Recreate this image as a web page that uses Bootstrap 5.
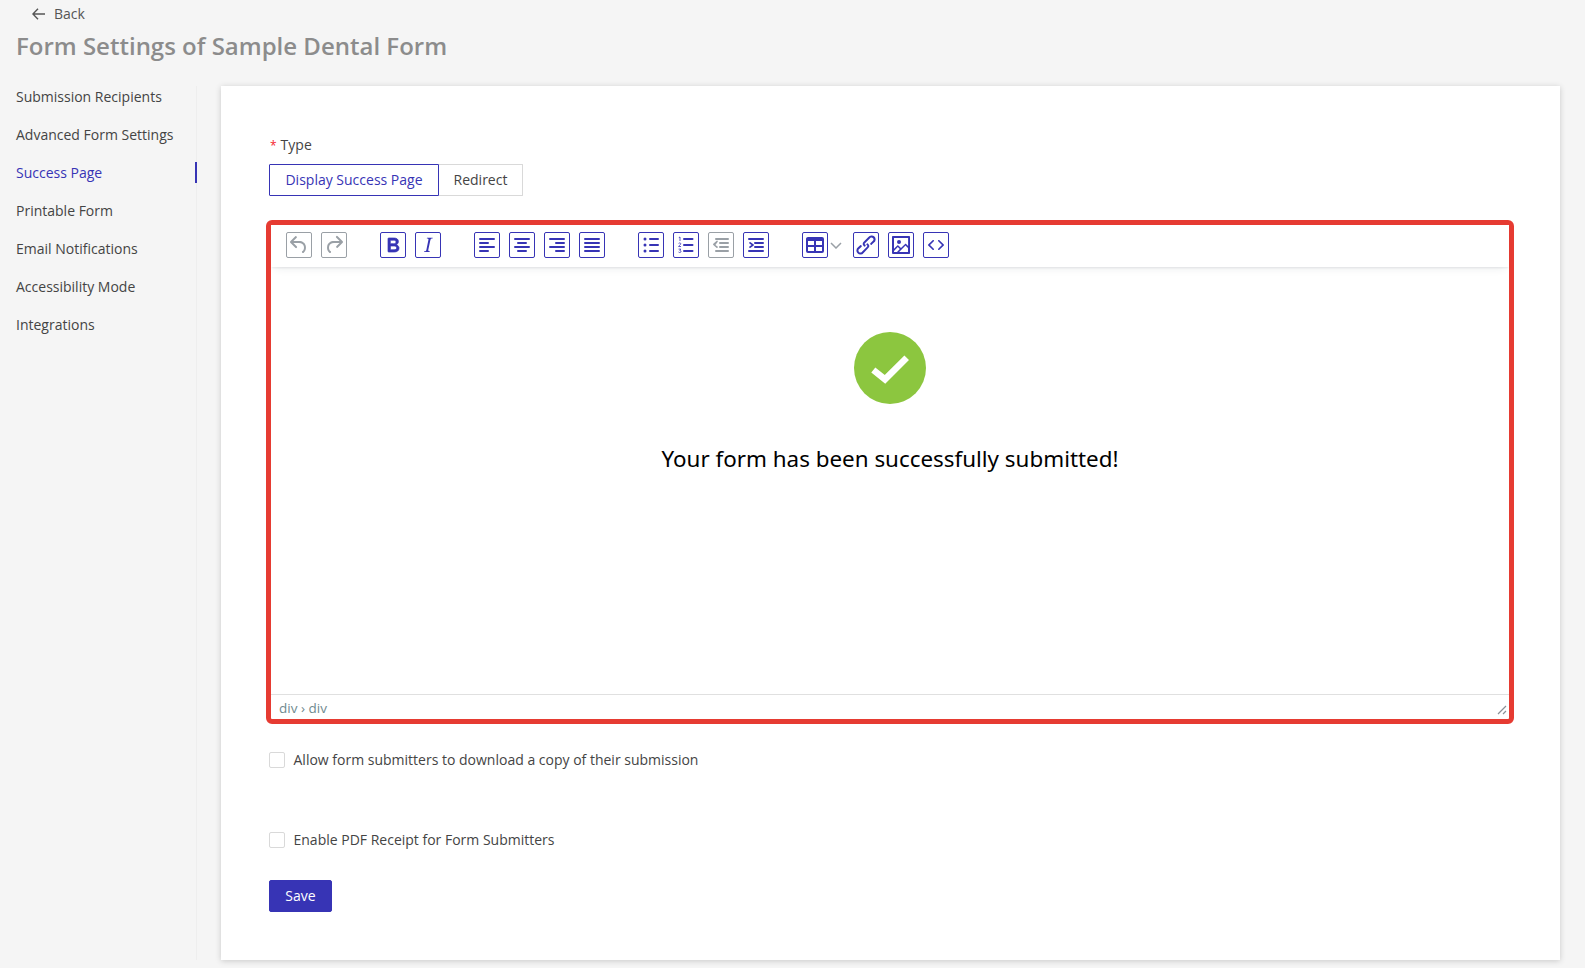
<!DOCTYPE html>
<html lang="en">
<head>
<meta charset="utf-8">
<title>Form Settings</title>
<link href="https://cdn.jsdelivr.net/npm/bootstrap@5.3.0/dist/css/bootstrap.min.css" rel="stylesheet">
<style>
html,body{height:100%}
body{background:#f5f5f5;font-family:"Open Sans","Noto Sans",sans-serif;font-size:14px;color:#444;overflow:hidden}
.back-row{height:27px;padding-left:32px;gap:9px;color:#555}
.back-row a{color:#555;text-decoration:none}
.page-title{margin:2px 0 24px 16px;font-size:24px;line-height:33px;font-weight:600;color:#8c8c8c}
.side-nav{width:197px;height:874px;border-right:1px solid #eeeeee;gap:17px}
.side-link{display:block;line-height:21px;padding-left:16px;color:#444;text-decoration:none;margin-right:-1px}
.side-link.on{color:#3734b5;border-right:2px solid #3734b5}
.sheet{width:1339px;height:874px;margin-left:24px;background:#fff;box-shadow:0 1px 6px rgba(0,0,0,.18);padding:48px 46px 0 48px}
.req-star{color:#f5222d;margin:0 4px 0 1px;font-size:12px}
.field-label{line-height:21px;margin-bottom:8px;color:#444}
.seg{width:254px}
.seg .btn{height:32px;border-radius:0;font-size:14px;line-height:30px;padding:0;background:#fff;--bs-btn-border-width:1px}
.seg .seg-on{width:170px;border:1px solid #3734b5;color:#3734b5;position:relative;z-index:1;border-radius:1px 0 0 1px}
.seg .seg-off{width:84px;border:1px solid #d9d9d9;border-left:0;color:#444;margin-left:0!important;border-radius:0 1px 1px 0}
.editor{margin:24px 0 0 -3px;height:504px;border:5px solid #e63b32;border-radius:6px;background:#fff}
.ed-bar{height:42px;padding:7px 0 0 15px;background:#fff;box-shadow:0 2px 2px -1px rgba(34,47,62,.1),0 6px 8px -4px rgba(34,47,62,.07);position:relative;z-index:1}
.ed-btn{width:26px;height:26px;flex:none;border:1px solid #3734b5;border-radius:2px;margin-right:9px;color:#3734b5;background:#fff;display:flex;align-items:center;justify-content:center}
.ed-btn.off{border-color:#9aa0a6;color:#9aa0a6}
.ed-btn svg{width:24px;height:24px;fill:currentColor;display:block}
.ed-group{margin-right:24px}
.ed-btn.tail{margin-right:0}
.ed-chev{width:16px;height:26px;margin-right:9px;color:#9aa0a6}
.ico-bold{stroke:currentColor;stroke-width:.7}
.ico-digits{fill:none;stroke:currentColor;stroke-width:.8}
.ed-body{padding-top:65px;text-align:center;color:#000}
.ed-body svg{display:block;margin:0 auto 37px}
.ed-msg{font-family:"Noto Sans","Open Sans",sans-serif;font-size:22.4px;line-height:36px;color:#000}
.ed-status{height:25px;border-top:1px solid #e0e0e0;padding:0 2px 0 8px;font-size:13.5px;line-height:26px;color:#6f8a8f}
.opt-row{height:16px;gap:8.5px;color:#444}
.opt-row .form-check-input{width:16px;height:16px;margin:0;border:1px solid #d9d9d9;border-radius:2px;flex:none}
.opt-row label{line-height:16px}
.first-opt{margin-top:28px}
.second-opt{margin-top:64px}
.save-btn{margin-top:32px;width:63px;height:32px;padding:0;border-radius:2px;background:#3734b5;border-color:#3734b5;color:#fff;font-size:14px;line-height:30px}
</style>
</head>
<body>
<div class="back-row d-flex align-items-center">
  <svg width="13" height="12" viewBox="0 0 13 12" fill="none" stroke="#555" stroke-width="1.4"><path d="M6 .7 .9 6 6 11.3M1 6h12"/></svg>
  <a href="#">Back</a>
</div>
<h1 class="page-title">Form Settings of Sample Dental Form</h1>
<div class="d-flex">
  <nav class="side-nav d-flex flex-column flex-shrink-0">
    <a class="side-link" href="#">Submission Recipients</a>
    <a class="side-link" href="#">Advanced Form Settings</a>
    <a class="side-link on" href="#">Success Page</a>
    <a class="side-link" href="#">Printable Form</a>
    <a class="side-link" href="#">Email Notifications</a>
    <a class="side-link" href="#">Accessibility Mode</a>
    <a class="side-link" href="#">Integrations</a>
  </nav>
  <main class="sheet">
    <div class="field-label"><span class="req-star">*</span>Type</div>
    <div class="btn-group seg d-flex" role="group">
      <button type="button" class="btn seg-on">Display Success Page</button>
      <button type="button" class="btn seg-off">Redirect</button>
    </div>
    <div class="editor d-flex flex-column">
      <div class="ed-bar d-flex">
        <div class="d-flex ed-group">
          <span class="ed-btn off"><svg viewBox="0 0 24 24"><path d="M6.4 8H12c3.7 0 6.2 2 6.8 5.1.6 2.7-.4 5.6-2.3 6.8a1 1 0 0 1-1-1.8c1.1-.6 1.8-2.7 1.4-4.6-.5-2.1-2.1-3.5-4.9-3.5H6.4l3.3 3.3a1 1 0 1 1-1.4 1.4l-5-5a1 1 0 0 1 0-1.4l5-5a1 1 0 0 1 1.4 1.4L6.4 8z"/></svg></span>
          <span class="ed-btn off"><svg viewBox="0 0 24 24"><path d="M17.6 10H12c-2.8 0-4.4 1.4-4.9 3.5-.4 2 .3 4 1.4 4.6a1 1 0 1 1-1 1.8c-2-1.2-2.9-4.1-2.3-6.8.6-3 3-5.1 6.8-5.1h5.6l-3.3-3.3a1 1 0 1 1 1.4-1.4l5 5a1 1 0 0 1 0 1.4l-5 5a1 1 0 0 1-1.4-1.4l3.3-3.3z"/></svg></span>
        </div>
        <div class="d-flex ed-group">
          <span class="ed-btn"><svg class="ico-bold" viewBox="0 0 24 24"><path d="M7.8 19c-.3 0-.5 0-.6-.2l-.2-.5V5.7c0-.2 0-.4.2-.5l.6-.2h5c1.5 0 2.7.3 3.5 1 .7.6 1.1 1.4 1.1 2.5a3 3 0 0 1-.6 1.9c-.4.6-1 1-1.6 1.2.4.1.9.3 1.3.6s.8.7 1 1.2c.4.4.5 1 .5 1.6 0 1.3-.4 2.3-1.3 3-.8.7-2.1 1-3.8 1H7.8zm5-8.3c.6 0 1.2-.1 1.6-.5.4-.3.6-.7.6-1.3 0-1.1-.8-1.7-2.3-1.7H9.3v3.5h3.4zm.5 6c.7 0 1.3-.1 1.7-.4.4-.4.6-.9.6-1.5s-.2-1-.7-1.4c-.4-.3-1-.4-2-.4H9.4v3.8h4z"/></svg></span>
          <span class="ed-btn"><svg viewBox="0 0 24 24"><path d="M16.7 4.7l-.1.9h-.3c-.6 0-1 0-1.4.3-.3.3-.4.6-.5 1.1l-2.1 9.8v.6c0 .5.4.8 1.4.8h.2l-.2.8H8l.2-.8h.2c1.1 0 1.8-.5 2-1.5l2-9.8.1-.5c0-.6-.4-.8-1.4-.8h-.3l.2-.9h5.8z"/></svg></span>
        </div>
        <div class="d-flex ed-group">
          <span class="ed-btn"><svg viewBox="0 0 24 24"><path d="M5 5h14a1 1 0 0 1 0 2H5a1 1 0 1 1 0-2zm0 4h8a1 1 0 0 1 0 2H5a1 1 0 1 1 0-2zm0 8h8a1 1 0 0 1 0 2H5a1 1 0 0 1 0-2zm0-4h14a1 1 0 0 1 0 2H5a1 1 0 0 1 0-2z"/></svg></span>
          <span class="ed-btn"><svg viewBox="0 0 24 24"><path d="M5 5h14a1 1 0 0 1 0 2H5a1 1 0 1 1 0-2zm3 4h8a1 1 0 0 1 0 2H8a1 1 0 1 1 0-2zm0 8h8a1 1 0 0 1 0 2H8a1 1 0 0 1 0-2zm-3-4h14a1 1 0 0 1 0 2H5a1 1 0 0 1 0-2z"/></svg></span>
          <span class="ed-btn"><svg viewBox="0 0 24 24"><path d="M5 5h14a1 1 0 0 1 0 2H5a1 1 0 1 1 0-2zm6 4h8a1 1 0 0 1 0 2h-8a1 1 0 0 1 0-2zm0 8h8a1 1 0 0 1 0 2h-8a1 1 0 0 1 0-2zm-6-4h14a1 1 0 0 1 0 2H5a1 1 0 0 1 0-2z"/></svg></span>
          <span class="ed-btn"><svg viewBox="0 0 24 24"><path d="M5 5h14a1 1 0 0 1 0 2H5a1 1 0 1 1 0-2zm0 4h14a1 1 0 0 1 0 2H5a1 1 0 1 1 0-2zm0 4h14a1 1 0 0 1 0 2H5a1 1 0 0 1 0-2zm0 4h14a1 1 0 0 1 0 2H5a1 1 0 0 1 0-2z"/></svg></span>
        </div>
        <div class="d-flex ed-group">
          <span class="ed-btn"><svg viewBox="0 0 24 24"><path d="M11 5h8a1 1 0 0 1 0 2h-8a1 1 0 0 1 0-2zm0 6h8a1 1 0 0 1 0 2h-8a1 1 0 0 1 0-2zm0 6h8a1 1 0 0 1 0 2h-8a1 1 0 0 1 0-2z"/><circle cx="6" cy="6" r="1.5"/><circle cx="6" cy="12" r="1.5"/><circle cx="6" cy="18" r="1.5"/></svg></span>
          <span class="ed-btn"><svg viewBox="0 0 24 24"><path d="M10 17h8.500a1 1 0 0 1 0 2H10a1 1 0 0 1 0-2zm0-6h8.500a1 1 0 0 1 0 2H10a1 1 0 0 1 0-2zm0-6h8.500a1 1 0 0 1 0 2H10a1 1 0 0 1 0-2z"/><path class="ico-digits" d="M4.800 4.600 6 4v4M4.600 10.400c.3-.6 2.200-.7 2.200.4 0 .8-1.600 1.500-2.200 2.700H7M4.600 16.100h2.200l-1 1.400c.8 0 1.200.4 1.200 1s-.5 1-1.200 1-1.100-.2-1.300-.5"/></svg></span>
          <span class="ed-btn off"><svg viewBox="0 0 24 24"><path d="M7 5h12a1 1 0 0 1 0 2H7a1 1 0 1 1 0-2zm4 4h8a1 1 0 0 1 0 2h-8a1 1 0 0 1 0-2zm0 4h8a1 1 0 0 1 0 2h-8a1 1 0 0 1 0-2zm-4 4h12a1 1 0 0 1 0 2H7a1 1 0 0 1 0-2zm1.600-3.400a.8.8 0 0 1-1.200 1.100l-3.100-2.800a.8.800 0 0 1 0-1.200l3.100-2.800a.8.800 0 0 1 1.200 1.100L6.400 12l2.200 1.600z"/></svg></span>
          <span class="ed-btn"><svg viewBox="0 0 24 24"><path d="M5 5h14a1 1 0 0 1 0 2H5a1 1 0 1 1 0-2zm6 4h8a1 1 0 0 1 0 2h-8a1 1 0 0 1 0-2zm0 4h8a1 1 0 0 1 0 2h-8a1 1 0 0 1 0-2zm-6 4h14a1 1 0 0 1 0 2H5a1 1 0 0 1 0-2zm.400-3.400L7.600 12 5.400 10.400a.8.8 0 0 1 1.200-1.100l3.100 2.100a.8.800 0 0 1 0 1.200l-3.100 2.100a.8.800 0 0 1-1.200-1.100z"/></svg></span>
        </div>
        <div class="d-flex">
          <span class="ed-btn tail"><svg viewBox="0 0 24 24"><path d="M19 4a2 2 0 0 1 2 2v12a2 2 0 0 1-2 2H5a2 2 0 0 1-2-2V6c0-1.100.9-2 2-2h14zM5 14v4h6v-4H5zm14 0h-6v4h6v-4zm0-6h-6v4h6V8zm-8 0H5v4h6V8z" fill-rule="evenodd"/></svg></span>
          <span class="ed-chev d-flex align-items-center justify-content-center"><svg width="12" height="7" viewBox="0 0 12 7" fill="none" stroke="currentColor" stroke-width="1.500"><path d="m1 1 5 5 5-5"/></svg></span>
          <span class="ed-btn"><svg viewBox="0 0 24 24"><path d="M6.200 12.300a1 1 0 0 1 1.400 1.400l-2.100 2.100a2 2 0 1 0 2.700 2.700l4.800-4.800a1 1 0 0 0 0-1.400 1 1 0 1 1 1.300-1.400 3 3 0 0 1 0 4.200l-4.700 4.800a4 4 0 1 1-5.600-5.600l2.200-2zm11.600-.6a1 1 0 0 1-1.400-1.400l2-2a2 2 0 1 0-2.600-2.800L11 10.200a1 1 0 0 0 0 1.400 1 1 0 1 1-1.300 1.400 3 3 0 0 1 0-4.200l4.700-4.800a4 4 0 1 1 5.600 5.600l-2.200 2z"/></svg></span>
          <span class="ed-btn"><svg viewBox="0 0 24 24"><path d="M4 3h16c.600 0 1 .4 1 1v16c0 .600-.4 1-1 1H4a1 1 0 0 1-1-1V4c0-.6.4-1 1-1zm1 2v10.700l3.300-3.200c.3-.3.700-.3 1 0L12 15l4.100-4c.3-.4.800-.4 1 0l2 1.900V5H5zm0 12.900V19h3l2.800-2.900-2-2L5 17.900zM19 15l-2.500-2.400-6.400 6.400H19v-4zm-9-4a2 2 0 1 1 0-4 2 2 0 0 1 0 4z" fill-rule="evenodd"/></svg></span>
          <span class="ed-btn"><svg viewBox="0 0 24 24"><path d="M9.800 15.700c.3.300.3.800 0 1-.3.400-.9.400-1.200 0l-4.400-4.100a.8.800 0 0 1 0-1.200l4.400-4.200c.3-.3.900-.3 1.200 0 .3.300.3.800 0 1.100L6 12l3.800 3.700zm4.400 0L18 12l-3.800-3.700a.8.800 0 0 1 0-1.100c.3-.3.900-.3 1.200 0l4.400 4.200c.3.300.3.900 0 1.200l-4.400 4.100c-.3.400-.9.400-1.200 0a.8.800 0 0 1 0-1z"/></svg></span>
        </div>
      </div>
      <div class="ed-body flex-grow-1">
        <svg width="72" height="72" viewBox="0 0 72 72"><circle cx="36" cy="36" r="36" fill="#8cc63f"/><path d="M19.300 38 31 47.300 52.700 25.700" fill="none" stroke="#fff" stroke-width="6.500"/></svg>
        <div class="ed-msg">Your form has been successfully submitted!</div>
      </div>
      <div class="ed-status d-flex justify-content-between">
        <span>div › div</span>
        <svg class="align-self-end mb-1" width="10" height="10" viewBox="0 0 10 10" fill="none" stroke="#8a9096" stroke-width="1.200"><path d="M1 9 9 1M6 9l3-3"/></svg>
      </div>
    </div>
    <div class="opt-row d-flex align-items-center first-opt">
      <input class="form-check-input" type="checkbox" id="optA">
      <label for="optA">Allow form submitters to download a copy of their submission</label>
    </div>
    <div class="opt-row d-flex align-items-center second-opt">
      <input class="form-check-input" type="checkbox" id="optB">
      <label for="optB">Enable PDF Receipt for Form Submitters</label>
    </div>
    <button type="button" class="btn save-btn d-block">Save</button>
  </main>
</div>
<script src="https://cdn.jsdelivr.net/npm/bootstrap@5.3.0/dist/js/bootstrap.bundle.min.js"></script>
</body>
</html>
